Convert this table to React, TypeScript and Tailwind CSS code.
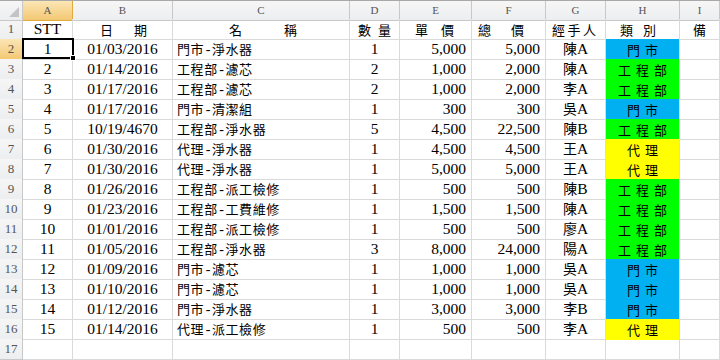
const cols = 'grid grid-cols-[23px_50px_100px_177px_50px_72px_74px_60px_74px_1fr]';

type Row = [number, string, string, number, string, string, string, string, string];

const rows: Row[] = [
  [1, '01/03/2016', '門市-淨水器', 1, '5,000', '5,000', '陳', 'A', '門市'],
  [2, '01/14/2016', '工程部-濾芯', 2, '1,000', '2,000', '陳', 'A', '工程部'],
  [3, '01/17/2016', '工程部-濾芯', 2, '1,000', '2,000', '李', 'A', '工程部'],
  [4, '01/17/2016', '門市-清潔組', 1, '300', '300', '吳', 'A', '門市'],
  [5, '10/19/4670', '工程部-淨水器', 5, '4,500', '22,500', '陳', 'B', '工程部'],
  [6, '01/30/2016', '代理-淨水器', 1, '4,500', '4,500', '王', 'A', '代理'],
  [7, '01/30/2016', '代理-淨水器', 1, '5,000', '5,000', '王', 'A', '代理'],
  [8, '01/26/2016', '工程部-派工檢修', 1, '500', '500', '陳', 'B', '工程部'],
  [9, '01/23/2016', '工程部-工費維修', 1, '1,500', '1,500', '陳', 'A', '工程部'],
  [10, '01/01/2016', '工程部-派工檢修', 1, '500', '500', '廖', 'A', '工程部'],
  [11, '01/05/2016', '工程部-淨水器', 3, '8,000', '24,000', '陽', 'A', '工程部'],
  [12, '01/09/2016', '門市-濾芯', 1, '1,000', '1,000', '吳', 'A', '門市'],
  [13, '01/10/2016', '門市-濾芯', 1, '1,000', '1,000', '吳', 'A', '門市'],
  [14, '01/12/2016', '門市-淨水器', 1, '3,000', '3,000', '李', 'B', '門市'],
  [15, '01/14/2016', '代理-派工檢修', 1, '500', '500', '李', 'A', '代理'],
];

const fills: Record<string, string> = {
  門市: 'bg-[#00b0f0]',
  工程部: 'bg-[#00ff00]',
  代理: 'bg-[#ffff00]',
};

const cell = 'border-r border-b border-[#dadada] overflow-hidden whitespace-nowrap';
const cjk = "font-['Noto_Sans_CJK_TC',sans-serif] text-[13px]";

function RowHead({ n, active }: { n: number; active?: boolean }) {
  return (
    <div
      className={`flex items-end justify-center pb-[1px] border-r border-b text-[13px] text-[#555] ${
        active
          ? 'bg-gradient-to-b from-[#fbe6b4] to-[#f3c873] border-[#e2a93e]'
          : 'bg-gradient-to-b from-[#f6f6f6] to-[#eceef0] border-[#c8c8c8]'
      }`}
    >
      {n}
    </div>
  );
}

function Spread({ chars, pl, pr }: { chars: string[]; pl: string; pr: string }) {
  return (
    <div className={`${cell} ${cjk} flex items-center justify-between ${pl} ${pr}`}>
      {chars.map((c, i) => (
        <span key={i}>{c}</span>
      ))}
    </div>
  );
}

export default function App() {
  const letters = ['A', 'B', 'C', 'D', 'E', 'F', 'G', 'H', 'I'];
  return (
    <div className="w-[720px] h-[360px] overflow-hidden bg-white text-black font-['Liberation_Serif','Noto_Sans_CJK_TC',serif] text-[15.5px] leading-[19px]">
      {/* column headers */}
      <div className={`${cols} h-[19px] border-t border-[#a8a8a8]`}>
        <div className="relative border-r border-b border-[#c8c8c8] bg-gradient-to-b from-[#f6f6f6] to-[#eceef0]">
          <svg className="absolute right-[3px] bottom-[3px]" width="10" height="10" viewBox="0 0 10 10">
            <polygon points="10,0 10,10 0,10" fill="#c4c4c4" />
          </svg>
        </div>
        {letters.map((l, i) => (
          <div
            key={l}
            className={`flex items-center justify-center border-r border-b text-[11px] text-[#555] ${
              i === 0
                ? 'bg-gradient-to-b from-[#fbe6b4] to-[#f3c873] border-[#e2a93e]'
                : 'bg-gradient-to-b from-[#f6f6f6] to-[#eceef0] border-[#c8c8c8]'
            }`}
          >
            {l}
          </div>
        ))}
      </div>

      {/* row 1: titles */}
      <div className={`${cols} h-[20px]`}>
        <RowHead n={1} />
        <div className={`${cell} text-center`}>STT</div>
        <Spread chars={['日', '期']} pl="pl-[27px]" pr="pr-[25px]" />
        <Spread chars={['名', '稱']} pl="pl-[56px]" pr="pr-[52px]" />
        <Spread chars={['數', '量']} pl="pl-[8px]" pr="pr-[8px]" />
        <Spread chars={['單', '價']} pl="pl-[15px]" pr="pr-[17px]" />
        <Spread chars={['總', '價']} pl="pl-[6px]" pr="pr-[21px]" />
        <Spread chars={['經', '手', '人']} pl="pl-[6px]" pr="pr-[9px]" />
        <Spread chars={['類', '別']} pl="pl-[14px]" pr="pr-[23px]" />
        <div className={`${cell} ${cjk} flex items-center pl-[13px]`}>備</div>
      </div>

      {rows.map((r, idx) => {
        const [stt, date, name, qty, price, total, who, whoSuffix, cat] = r;
        const [left, right] = name.split('-');
        return (
          <div key={stt} className={`${cols} h-[20px]`}>
            <RowHead n={idx + 2} active={idx === 0} />
            <div className={`${cell} text-center ${idx === 0 ? 'relative !overflow-visible z-10' : ''}`}>
              {stt}
              {idx === 0 && (
                <>
                  <div className="absolute left-[-1px] top-[-1px] w-[52px] h-[21px] border-2 border-black" />
                  <div className="absolute left-[47px] top-[16px] w-[6px] h-[6px] bg-black border border-white" />
                </>
              )}
            </div>
            <div className={`${cell} text-center`}>{date}</div>
            <div className={`${cell} pl-[4px]`}>
              <span className={`${cjk} tracking-[0.6px]`}>{left}</span>
              <span className="text-[14px] mx-[1.5px]">-</span>
              <span className={`${cjk} tracking-[0.6px]`}>{right}</span>
            </div>
            <div className={`${cell} text-center`}>{qty}</div>
            <div className={`${cell} text-right pr-[5px]`}>{price}</div>
            <div className={`${cell} text-right pr-[5px]`}>{total}</div>
            <div className={`${cell} text-center`}>
              <span className="font-['Noto_Sans_CJK_TC',sans-serif] text-[14px]">{who}</span>
              {whoSuffix}
            </div>
            <div
              className={`border-r border-[#dadada] ${fills[cat]} ${cjk} tracking-[5px] pl-[5px] flex items-center justify-center`}
            >
              {cat}
            </div>
            <div className={cell} />
          </div>
        );
      })}

      {/* row 17 empty */}
      <div className={`${cols} h-[20px]`}>
        <RowHead n={17} />
        {letters.map((l) => (
          <div key={l} className={cell} />
        ))}
      </div>
    </div>
  );
}
